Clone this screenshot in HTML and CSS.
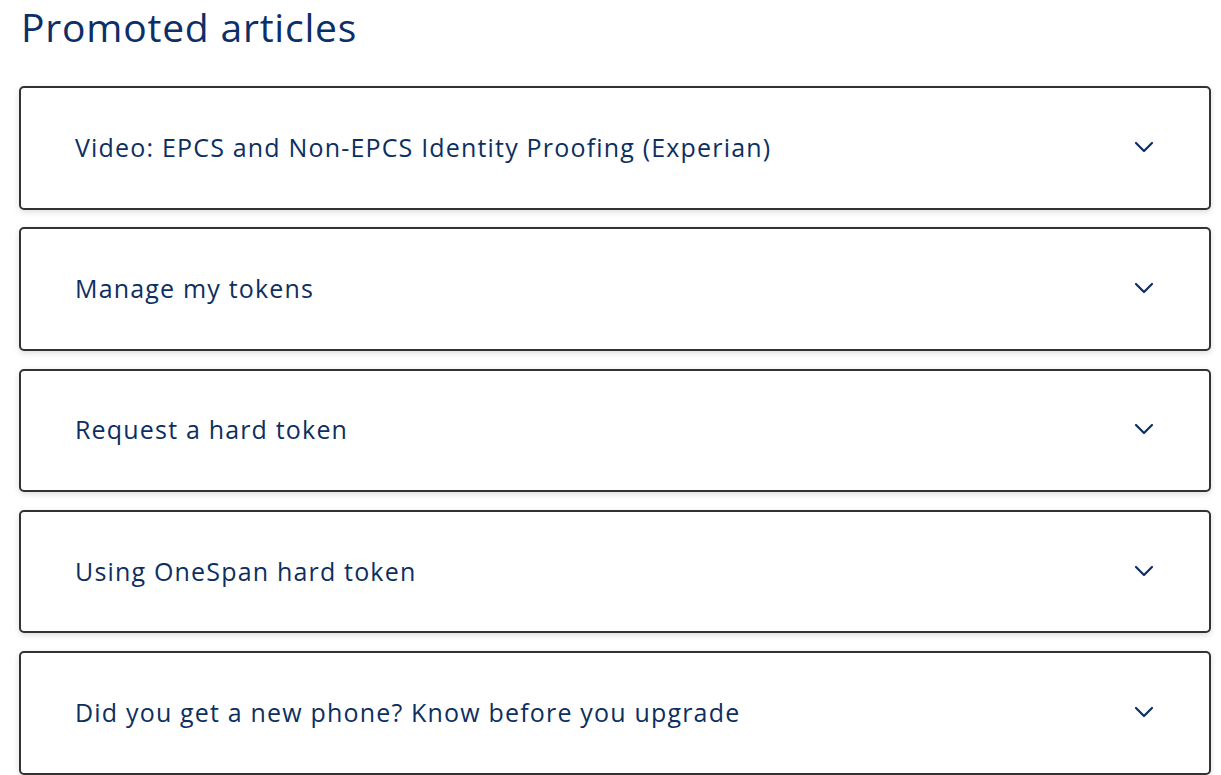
FILE: index.html
```html
<!DOCTYPE html>
<html lang="en">
<head>
<meta charset="utf-8">
<title>Promoted articles</title>
<link rel="stylesheet" href="styles.css">
</head>
<body>
<section class="promoted">
  <h2 class="promoted-title">Promoted articles</h2>
  <ul class="article-list">
    <li class="article-card"><span class="article-name">Video: EPCS and Non-EPCS Identity Proofing (Experian)</span><svg class="chevron" viewBox="0 0 20 12" aria-hidden="true"><path d="M2 2 L10 10 L18 2"/></svg></li>
    <li class="article-card"><span class="article-name">Manage my tokens</span><svg class="chevron" viewBox="0 0 20 12" aria-hidden="true"><path d="M2 2 L10 10 L18 2"/></svg></li>
    <li class="article-card"><span class="article-name">Request a hard token</span><svg class="chevron" viewBox="0 0 20 12" aria-hidden="true"><path d="M2 2 L10 10 L18 2"/></svg></li>
    <li class="article-card"><span class="article-name">Using OneSpan hard token</span><svg class="chevron" viewBox="0 0 20 12" aria-hidden="true"><path d="M2 2 L10 10 L18 2"/></svg></li>
    <li class="article-card"><span class="article-name">Did you get a new phone? Know before you upgrade</span><svg class="chevron" viewBox="0 0 20 12" aria-hidden="true"><path d="M2 2 L10 10 L18 2"/></svg></li>
  </ul>
</section>
</body>
</html>
```
FILE: styles.css
```css
html, body {
  margin: 0;
  padding: 0;
  background: #ffffff;
}
body {
  font-family: "Open Sans", "Liberation Sans", sans-serif;
  color: #0d2f5f;
}
.promoted {
  padding: 0 10px 0 19px;
}
.promoted-title {
  margin: 0;
  padding: 2px 0 0 2px;
  font-size: 39px;
  font-weight: 400;
  letter-spacing: 0.8px;
  line-height: 50px;
  color: #0b2f66;
}
.article-list {
  list-style: none;
  margin: 34px 0 0 0;
  padding: 0;
  display: flex;
  flex-direction: column;
  gap: 17.75px;
}
.article-card {
  box-sizing: border-box;
  height: 123.5px;
  border: 2px solid #333333;
  border-radius: 5px;
  background: #fff;
  box-shadow: 0 2px 6px rgba(0, 0, 0, 0.14);
  display: flex;
  align-items: center;
  justify-content: space-between;
  padding: 0 55px 2px 54px;
}
.article-name {
  font-size: 25px;
  letter-spacing: 1.18px;
  color: #0d2f5f;
}
.chevron {
  width: 20px;
  height: 12px;
  fill: none;
  stroke: #0d2f5f;
  stroke-width: 2.2;
  stroke-linecap: round;
  stroke-linejoin: round;
}
```
